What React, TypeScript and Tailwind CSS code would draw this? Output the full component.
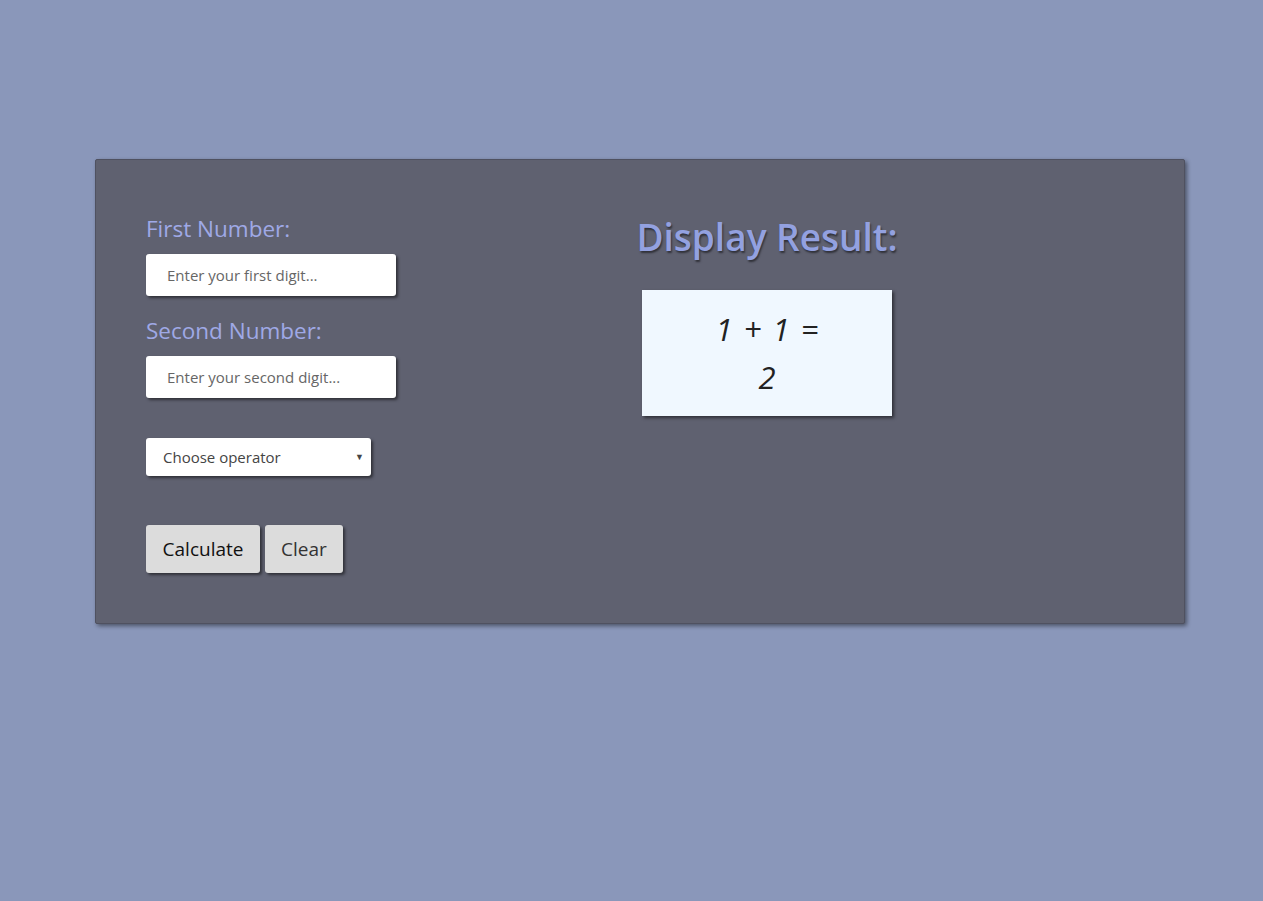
import React from 'react';

export default function App() {
  return (
    <div className="min-h-[901px] w-full bg-[#8a97ba] pt-[159px]" style={{ fontFamily: '"Open Sans", "Noto Sans", sans-serif' }}>
      {/* Calculator panel */}
      <div className="ml-[95px] flex h-[465px] w-[1090px] rounded-[2px] border border-[#4f5160] bg-[#5f6170] pl-[50px] pt-[52px] shadow-[2px_2px_4px_rgba(0,0,0,0.45)]">
        {/* Inputs */}
        <div className="flex w-[496px] flex-col">
          <label className="text-[22.5px] leading-[34px] text-[#9fa9e6]">First Number:</label>
          <input
            className="mt-[8px] h-[42px] w-[250px] rounded-[3px] bg-white pl-[21px] text-[15px] text-[#555] shadow-[2px_2px_3px_rgba(0,0,0,0.5)] outline-none placeholder:text-[#666]"
            placeholder="Enter your first digit..."
          />
          <label className="mt-[18px] text-[22.5px] leading-[34px] text-[#9fa9e6]">Second Number:</label>
          <input
            className="mt-[8px] h-[42px] w-[250px] rounded-[3px] bg-white pl-[21px] text-[15px] text-[#555] shadow-[2px_2px_3px_rgba(0,0,0,0.5)] outline-none placeholder:text-[#666]"
            placeholder="Enter your second digit..."
          />
          <div className="relative mt-[40px] flex h-[38px] w-[225px] items-center rounded-[3px] bg-white pl-[17px] text-[15px] text-[#444] shadow-[2px_2px_3px_rgba(0,0,0,0.5)]">
            Choose operator
            <span className="absolute right-[7px] top-[12px] text-[9px] text-[#444]">▼</span>
          </div>
          <div className="mt-[49px] flex gap-[5px]">
            <button className="h-[48px] w-[114px] rounded-[3px] bg-[#dcdcdc] text-[19px] text-[#111] shadow-[2px_2px_3px_rgba(0,0,0,0.5)]">
              Calculate
            </button>
            <button className="h-[48px] w-[78px] rounded-[3px] bg-[#dcdcdc] text-[19px] text-[#333] shadow-[2px_2px_3px_rgba(0,0,0,0.5)]">
              Clear
            </button>
          </div>
        </div>

        {/* Result */}
        <div className="flex w-[250px] flex-col items-center">
          <h1 className="whitespace-nowrap pt-[1px] text-[37px] font-semibold leading-[48px] text-[#93a1e0] [text-shadow:1px_2px_2px_rgba(0,0,0,0.5)]">
            Display Result:
          </h1>
          <div className="mt-[29px] flex h-[126px] w-[250px] flex-col items-center justify-center bg-[#f0f8ff] text-[31px] italic leading-[48px] text-[#222] [word-spacing:3px] shadow-[2px_2px_3px_rgba(0,0,0,0.5)]">
            <span>1 + 1 =</span>
            <span>2</span>
          </div>
        </div>
      </div>
    </div>
  );
}
